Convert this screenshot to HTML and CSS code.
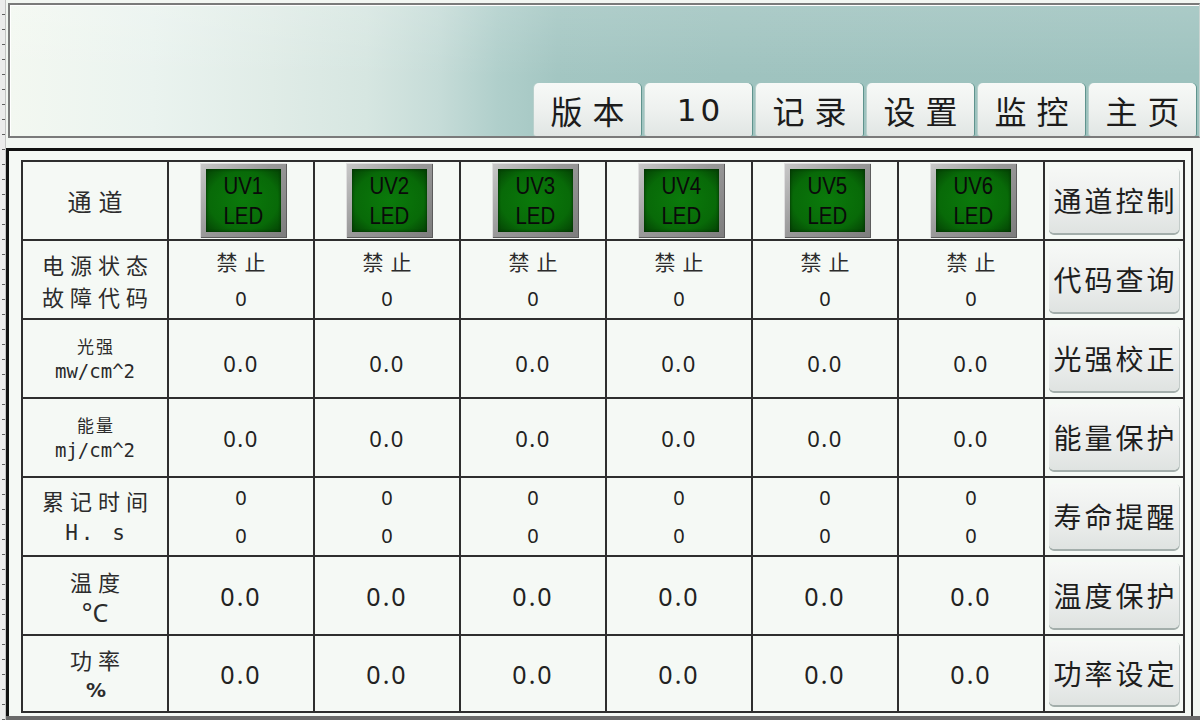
FILE: index.html
```html
<!DOCTYPE html>
<html lang="zh-CN">
<head>
<meta charset="utf-8">
<title>UV LED 监控</title>
<link rel="stylesheet" href="styles.css">
</head>
<body>
<div class="ruler"></div>
<div class="screen">
  <header class="header">
    <nav class="nav">
      <div class="nav-btn">版本</div>
      <div class="nav-btn num">10</div>
      <div class="nav-btn">记录</div>
      <div class="nav-btn">设置</div>
      <div class="nav-btn">监控</div>
      <div class="nav-btn">主页</div>
    </nav>
  </header>
  <main class="panel">
    <div class="grid">
      <div class="cell label big">通道</div>
      <div class="cell"><div class="led"><div class="led-in"><span>UV1</span><span>LED</span></div></div></div>
      <div class="cell"><div class="led"><div class="led-in"><span>UV2</span><span>LED</span></div></div></div>
      <div class="cell"><div class="led"><div class="led-in"><span>UV3</span><span>LED</span></div></div></div>
      <div class="cell"><div class="led"><div class="led-in"><span>UV4</span><span>LED</span></div></div></div>
      <div class="cell"><div class="led"><div class="led-in"><span>UV5</span><span>LED</span></div></div></div>
      <div class="cell"><div class="led"><div class="led-in"><span>UV6</span><span>LED</span></div></div></div>
      <div class="cell btn-cell"><div class="side-btn">通道控制</div></div>

      <div class="cell label"><span class="cn">电源状态</span><span class="cn">故障代码</span></div>
      <div class="cell pair"><span class="state">禁止</span><span class="n">0</span></div>
      <div class="cell pair"><span class="state">禁止</span><span class="n">0</span></div>
      <div class="cell pair"><span class="state">禁止</span><span class="n">0</span></div>
      <div class="cell pair"><span class="state">禁止</span><span class="n">0</span></div>
      <div class="cell pair"><span class="state">禁止</span><span class="n">0</span></div>
      <div class="cell pair"><span class="state">禁止</span><span class="n">0</span></div>
      <div class="cell btn-cell"><div class="side-btn">代码查询</div></div>

      <div class="cell label"><span class="cn small">光强</span><span class="mono">mw/cm^2</span></div>
      <div class="cell val low">0.0</div>
      <div class="cell val low">0.0</div>
      <div class="cell val low">0.0</div>
      <div class="cell val low">0.0</div>
      <div class="cell val low">0.0</div>
      <div class="cell val low">0.0</div>
      <div class="cell btn-cell"><div class="side-btn">光强校正</div></div>

      <div class="cell label"><span class="cn small">能量</span><span class="mono">mj/cm^2</span></div>
      <div class="cell val">0.0</div>
      <div class="cell val">0.0</div>
      <div class="cell val">0.0</div>
      <div class="cell val">0.0</div>
      <div class="cell val">0.0</div>
      <div class="cell val">0.0</div>
      <div class="cell btn-cell"><div class="side-btn">能量保护</div></div>

      <div class="cell label"><span class="cn">累记时间</span><span class="mono hs">H. s</span></div>
      <div class="cell pair"><span class="n">0</span><span class="n">0</span></div>
      <div class="cell pair"><span class="n">0</span><span class="n">0</span></div>
      <div class="cell pair"><span class="n">0</span><span class="n">0</span></div>
      <div class="cell pair"><span class="n">0</span><span class="n">0</span></div>
      <div class="cell pair"><span class="n">0</span><span class="n">0</span></div>
      <div class="cell pair"><span class="n">0</span><span class="n">0</span></div>
      <div class="cell btn-cell"><div class="side-btn">寿命提醒</div></div>

      <div class="cell label"><span class="cn">温度</span><span class="unit">°C</span></div>
      <div class="cell val lg">0.0</div>
      <div class="cell val lg">0.0</div>
      <div class="cell val lg">0.0</div>
      <div class="cell val lg">0.0</div>
      <div class="cell val lg">0.0</div>
      <div class="cell val lg">0.0</div>
      <div class="cell btn-cell"><div class="side-btn">温度保护</div></div>

      <div class="cell label"><span class="cn">功率</span><span class="pct">%</span></div>
      <div class="cell val lg">0.0</div>
      <div class="cell val lg">0.0</div>
      <div class="cell val lg">0.0</div>
      <div class="cell val lg">0.0</div>
      <div class="cell val lg">0.0</div>
      <div class="cell val lg">0.0</div>
      <div class="cell btn-cell"><div class="side-btn">功率设定</div></div>
    </div>
  </main>
</div>
</body>
</html>
```

FILE: styles.css
```css
html, body {
  margin: 0;
  padding: 0;
}
body {
  width: 1200px;
  height: 720px;
  overflow: hidden;
  display: flex;
  background: linear-gradient(to top, #6a6a6a 0 4px, #f2f6f2 4px);
  font-family: "Noto Sans CJK SC", "Noto Sans", sans-serif;
  color: #222;
}

.ruler {
  width: 5px;
  flex: none;
  border-right: 1px solid #c4c4c4;
  background-color: #ececec;
  background-image: linear-gradient(to bottom, transparent 0 14px, #5f5f5f 14px 16px, transparent 16px);
  background-size: 3px 15px;
  background-position: 2px 0;
  background-repeat: repeat-y;
}

.screen {
  flex: 1;
  display: flex;
  flex-direction: column;
  min-width: 0;
}

.header {
  margin: 3px 0 0 2px;
  height: 131px;
  border: 2px solid #7a7a7a;
  border-right: 1px solid #c9d4d1;
  box-shadow: inset 1px 1px 0 #ffffff;
  background:
    linear-gradient(to bottom, rgba(255,255,255,0.14) 0%, rgba(255,255,255,0) 55%),
    linear-gradient(to right, #f3f8f1 0%, #eaf3ef 12%, #e0ece7 22%, #d6e6e1 30%, #c6dcd8 36%, #b0cfcb 41%, #a3c6c2 46%, #9fc3bf 60%, #9dc2be 100%);
  display: flex;
  align-items: flex-end;
  justify-content: flex-end;
  padding-right: 3px;
}

.nav {
  display: flex;
  gap: 4px;
}

.nav-btn {
  width: 107px;
  height: 53px;
  box-sizing: border-box;
  border-radius: 5px 5px 2px 2px;
  background: linear-gradient(to bottom, #f7f9f7 0%, #eef1ef 50%, #e1e6e4 100%);
  box-shadow: 1px 0 0 #5f938d, -1px 0 0 #b9d0cc;
  display: flex;
  align-items: center;
  justify-content: center;
  font-size: 32px;
  letter-spacing: 10px;
  padding-left: 10px;
  color: #1c1c1c;
}
.nav-btn.num {
  font-family: "DejaVu Sans", sans-serif;
  font-size: 31px;
  letter-spacing: 4px;
  padding-left: 4px;
}

.panel {
  margin: 10px 7px 4px 0;
  flex: 1;
  border-top: 3px solid #111;
  border-left: 3px solid #111;
  border-right: 2px solid #2a2a2a;
  background: #f5f9f5;
  padding: 9px 6px 0 12px;
}

.grid {
  display: grid;
  grid-template-columns: 144px repeat(6, 144px) 138px;
  grid-template-rows: repeat(6, 77px) 75px;
  gap: 2px;
  padding: 2px;
  background: #2e2e2e;
  width: max-content;
}

.cell {
  background: #f5f9f5;
  display: flex;
  flex-direction: column;
  align-items: center;
  justify-content: center;
  min-width: 0;
}

.label {
  color: #2c2c2c;
}
.label.big {
  font-size: 24px;
  letter-spacing: 7px;
  padding-left: 7px;
}
.label .cn {
  font-size: 22px;
  line-height: 32px;
  letter-spacing: 6px;
  padding-left: 6px;
}
.label .cn.small {
  font-size: 17px;
  line-height: 24px;
  letter-spacing: 2px;
  padding-left: 2px;
}
.label .mono {
  font-family: "DejaVu Sans Mono", "Liberation Mono", monospace;
  font-size: 19px;
  line-height: 26px;
  color: #2a2a2a;
}
.label .mono.hs {
  font-size: 21px;
  line-height: 34px;
  letter-spacing: 3px;
  padding-left: 3px;
}
.label .unit {
  font-family: "Noto Sans", sans-serif;
  font-size: 25px;
  line-height: 30px;
}
.label .pct {
  font-family: "DejaVu Sans", sans-serif;
  font-weight: bold;
  font-size: 20px;
  line-height: 30px;
  letter-spacing: -2px;
}

.state {
  font-size: 21px;
  line-height: 38px;
  letter-spacing: 7px;
  padding-left: 7px;
  color: #2c2c2c;
}
.n {
  font-family: "Noto Sans", sans-serif;
  font-size: 20px;
  line-height: 38px;
  color: #222;
}

.val {
  font-family: "Noto Sans", sans-serif;
  font-size: 22px;
  letter-spacing: 1.5px;
  color: #222;
}
.val.low {
  padding-top: 9px;
}
.val.lg {
  font-size: 25px;
  letter-spacing: 2px;
}

.led {
  width: 87px;
  height: 75px;
  box-sizing: border-box;
  padding: 6px;
  margin-left: 4px;
  background: linear-gradient(135deg, #c9c9c9 0%, #9a9a9a 45%, #7d7d7d 100%);
  box-shadow: inset 1px 1px 0 #e0e0e0, inset -1px -1px 0 #5c5c5c;
}
.led-in {
  width: 100%;
  height: 100%;
  box-sizing: border-box;
  background: radial-gradient(ellipse at center, #0b7a0b 0%, #086a08 65%, #044004 100%);
  box-shadow: inset 0 0 3px #022a02;
  display: flex;
  flex-direction: column;
  align-items: center;
  justify-content: center;
  font-family: "Liberation Sans", "DejaVu Sans", sans-serif;
  font-size: 24px;
  line-height: 30px;
  color: #0a0a0a;
}
.led-in span {
  display: block;
  transform: scaleX(0.85);
}

.btn-cell {
  padding: 5px 4px 6px 4px;
  align-items: stretch;
}
.side-btn {
  flex: 1;
  border-radius: 5px;
  background: linear-gradient(to bottom, #f6f8f6 0%, #eceeed 55%, #dfe3e1 100%);
  box-shadow: 0 2px 0 #a3aeab, 1px 1px 0 #c3cbc9;
  display: flex;
  align-items: center;
  justify-content: center;
  font-size: 28px;
  letter-spacing: 3px;
  padding-left: 3px;
  color: #1e1e1e;
}
```
